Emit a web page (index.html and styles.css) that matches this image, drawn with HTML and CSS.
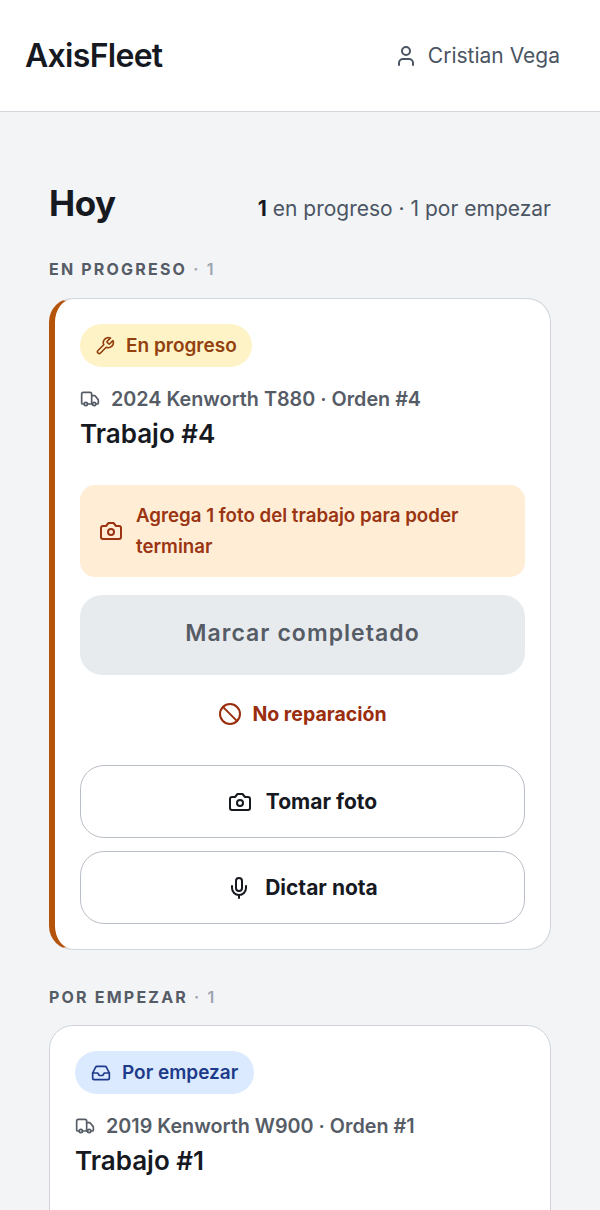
FILE: index.html
```html
<!DOCTYPE html>
<html lang="es">
<head>
    <meta charset="UTF-8">
    <meta name="viewport" content="width=device-width, initial-scale=1.0">
    <title>AxisFleet - Hoy</title>
    <link rel="stylesheet" href="styles.css">
</head>
<body>
    <header class="topbar">
        <div class="logo">AxisFleet</div>
        <div class="user">
            <svg class="icon icon-user" viewBox="0 0 24 24"><path d="M19 21v-2a4 4 0 0 0-4-4H9a4 4 0 0 0-4 4v2"/><circle cx="12" cy="7" r="4"/></svg>
            <span>Cristian Vega</span>
        </div>
    </header>

    <main class="content">
        <div class="page-head">
            <h1>Hoy</h1>
            <p class="summary"><strong>1</strong> en progreso · 1 por empezar</p>
        </div>

        <h2 class="section-label">EN PROGRESO <span>· 1</span></h2>
        <section class="card card-active">
            <span class="badge badge-progress">
                <svg class="icon" viewBox="0 0 24 24"><path d="M14.7 6.3a1 1 0 0 0 0 1.4l1.6 1.6a1 1 0 0 0 1.4 0l3.77-3.77a6 6 0 0 1-7.94 7.94l-6.91 6.91a2.12 2.12 0 0 1-3-3l6.91-6.91a6 6 0 0 1 7.94-7.94l-3.76 3.76z"/></svg>
                En progreso
            </span>
            <div class="meta">
                <svg class="icon" viewBox="0 0 24 24"><path d="M14 18V6a2 2 0 0 0-2-2H4a2 2 0 0 0-2 2v11a1 1 0 0 0 1 1h2"/><path d="M15 18H9"/><path d="M19 18h2a1 1 0 0 0 1-1v-3.65a1 1 0 0 0-.22-.624l-3.48-4.35A1 1 0 0 0 17.52 8H14"/><circle cx="17" cy="18" r="2"/><circle cx="7" cy="18" r="2"/></svg>
                2024 Kenworth T880 · Orden #4
            </div>
            <h3 class="job-title">Trabajo #4</h3>

            <div class="alert">
                <svg class="icon" viewBox="0 0 24 24"><path d="M14.5 4h-5L7 7H4a2 2 0 0 0-2 2v9a2 2 0 0 0 2 2h16a2 2 0 0 0 2-2V9a2 2 0 0 0-2-2h-3l-2.5-3z"/><circle cx="12" cy="13" r="3"/></svg>
                <p>Agrega 1 foto del trabajo para poder terminar</p>
            </div>
            <button class="btn-complete" disabled>Marcar completado</button>
            <button class="btn-link">
                <svg class="icon" viewBox="0 0 24 24"><circle cx="12" cy="12" r="10"/><path d="m4.9 4.9 14.2 14.2"/></svg>
                No reparación
            </button>
            <div class="actions">
                <button class="btn-outline">
                    <svg class="icon" viewBox="0 0 24 24"><path d="M14.5 4h-5L7 7H4a2 2 0 0 0-2 2v9a2 2 0 0 0 2 2h16a2 2 0 0 0 2-2V9a2 2 0 0 0-2-2h-3l-2.5-3z"/><circle cx="12" cy="13" r="3"/></svg>
                    Tomar foto
                </button>
                <button class="btn-outline">
                    <svg class="icon" viewBox="0 0 24 24"><path d="M12 2a3 3 0 0 0-3 3v7a3 3 0 0 0 6 0V5a3 3 0 0 0-3-3Z"/><path d="M19 10v2a7 7 0 0 1-14 0v-2"/><path d="M12 19v3"/></svg>
                    Dictar nota
                </button>
            </div>
        </section>

        <h2 class="section-label label-next">POR EMPEZAR <span>· 1</span></h2>
        <section class="card card-next">
            <span class="badge badge-next">
                <svg class="icon" viewBox="0 0 24 24"><path d="M22 12h-6l-2 3h-4l-2-3H2"/><path d="M5.45 5.11 2 12v6a2 2 0 0 0 2 2h16a2 2 0 0 0 2-2v-6l-3.45-6.89A2 2 0 0 0 16.76 4H7.24a2 2 0 0 0-1.79 1.11z"/></svg>
                Por empezar
            </span>
            <div class="meta">
                <svg class="icon" viewBox="0 0 24 24"><path d="M14 18V6a2 2 0 0 0-2-2H4a2 2 0 0 0-2 2v11a1 1 0 0 0 1 1h2"/><path d="M15 18H9"/><path d="M19 18h2a1 1 0 0 0 1-1v-3.65a1 1 0 0 0-.22-.624l-3.48-4.35A1 1 0 0 0 17.52 8H14"/><circle cx="17" cy="18" r="2"/><circle cx="7" cy="18" r="2"/></svg>
                2019 Kenworth W900 · Orden #1
            </div>
            <h3 class="job-title">Trabajo #1</h3>
        </section>
    </main>
</body>
</html>
```

FILE: styles.css
```css
* {
    box-sizing: border-box;
}

html, body {
    margin: 0;
    height: 1210px;
    overflow: hidden;
}

body {
    font-family: Inter, "Noto Sans", sans-serif;
    background-color: #f2f4f6;
    color: #16191f;
}

.icon {
    width: 20px;
    height: 20px;
    flex: none;
    fill: none;
    stroke: currentColor;
    stroke-width: 2;
    stroke-linecap: round;
    stroke-linejoin: round;
}

/* Top bar */
.topbar {
    height: 112px;
    padding: 0 40px 0 25px;
    display: flex;
    justify-content: space-between;
    align-items: center;
    background-color: #fff;
    border-bottom: 1px solid #d1d5da;
}

.logo {
    font-size: 32px;
    font-weight: 600;
    letter-spacing: -0.7px;
}

.user {
    display: flex;
    align-items: center;
    gap: 10px;
    font-size: 21px;
    color: #4b5563;
}

.icon-user {
    width: 24px;
    height: 24px;
}

/* Page */
.content {
    padding: 0 49px;
}

.page-head {
    height: 66px;
    margin-top: 59px;
    display: flex;
    justify-content: space-between;
    align-items: center;
}

h1 {
    margin: 0 0 3px;
    font-size: 35px;
    font-weight: 700;
    letter-spacing: -0.5px;
}

.summary {
    margin: 8px 0 0;
    font-size: 21px;
    color: #4b5563;
}

.summary strong {
    font-weight: 700;
    color: #16191f;
}

.section-label {
    margin: 22px 0 19px;
    font-size: 16px;
    line-height: 20px;
    font-weight: 700;
    letter-spacing: 2.2px;
    color: #565c66;
}

.section-label span {
    font-weight: 600;
    color: #9ca3af;
}

.label-next {
    margin-top: 37px;
    margin-bottom: 18px;
}

/* Cards */
.card {
    background-color: #fff;
    border: 1px solid #d1d5da;
    border-radius: 24px;
    padding: 25px;
}

.card-active {
    border-left: 6px solid #b45309;
}

.card-next {
    padding-bottom: 80px;
}

.badge {
    height: 43px;
    padding: 0 15px;
    display: inline-flex;
    align-items: center;
    gap: 11px;
    border-radius: 22px;
    font-size: 19px;
    font-weight: 600;
    vertical-align: top;
}

.badge-progress {
    background-color: #fef3c7;
    color: #92400e;
}

.badge-next {
    padding: 0 16px;
    background-color: #dbeafe;
    color: #1e3a8a;
}

.meta {
    margin-top: 19px;
    display: flex;
    align-items: center;
    gap: 11px;
    font-size: 19.75px;
    line-height: 26px;
    font-weight: 600;
    color: #565c66;
}

.job-title {
    margin: 6px 0 0;
    font-size: 26px;
    line-height: 32px;
    font-weight: 600;
}

.alert {
    margin-top: 35px;
    padding: 15px 19px;
    display: flex;
    align-items: center;
    gap: 13px;
    background-color: #ffedd5;
    border-radius: 15px;
    color: #9a3412;
}

.alert .icon {
    width: 24px;
    height: 24px;
}

.alert p {
    margin: 0;
    font-size: 18.7px;
    line-height: 31px;
    font-weight: 600;
}

button {
    font-family: inherit;
    width: 100%;
    display: flex;
    justify-content: center;
    align-items: center;
    cursor: pointer;
}

.btn-complete {
    height: 80px;
    margin-top: 18px;
    padding-bottom: 5px;
    border: none;
    border-radius: 22px;
    background-color: #e8ebee;
    color: #565c66;
    font-size: 23px;
    font-weight: 600;
    letter-spacing: 1.05px;
}

.btn-link {
    height: 40px;
    margin-top: 19px;
    gap: 10px;
    border: none;
    background: none;
    color: #9a2d0e;
    font-size: 19.5px;
    font-weight: 700;
}

.btn-link .icon {
    width: 24px;
    height: 24px;
}

.actions {
    margin-top: 31px;
    display: flex;
    flex-direction: column;
    gap: 13px;
}

.btn-outline {
    height: 73px;
    gap: 14px;
    background-color: #fff;
    border: 1px solid #b9bfc6;
    border-radius: 24px;
    color: #16191f;
    font-size: 21px;
    font-weight: 700;
}

.btn-outline .icon {
    width: 24px;
    height: 24px;
}
```
